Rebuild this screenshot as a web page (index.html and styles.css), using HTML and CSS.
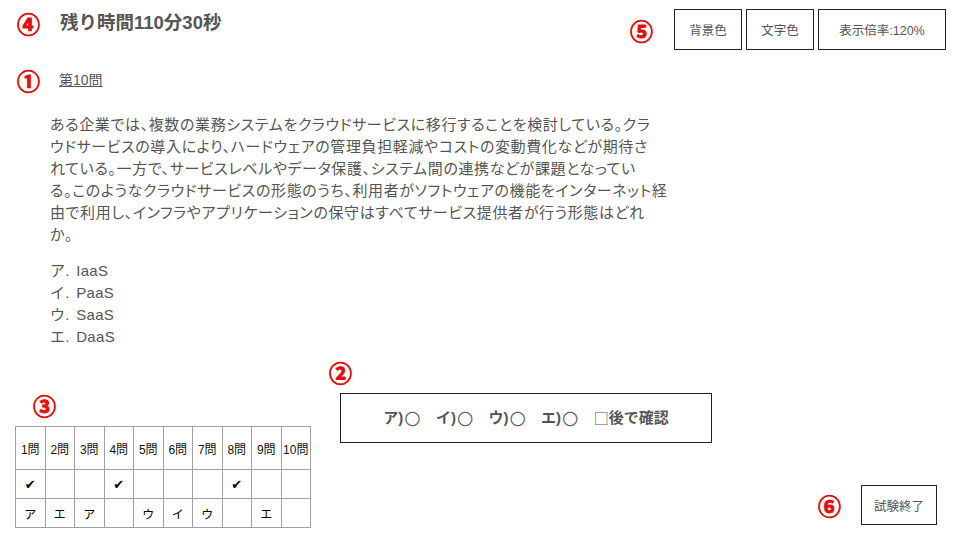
FILE: index.html
```html
<!DOCTYPE html>
<html lang="ja">
<head>
<meta charset="utf-8">
<link rel="stylesheet" href="styles.css">
</head>
<body>
<div class="page">
  <header class="header">
    <div class="timer-group">
      <span class="mark">④</span>
      <span class="timer">残り時間110分30秒</span>
    </div>
    <div class="tools">
      <span class="mark">⑤</span>
      <div class="tool-buttons">
        <button class="btn btn-bg">背景色</button>
        <button class="btn btn-fg">文字色</button>
        <button class="btn btn-zoom">表示倍率:120%</button>
      </div>
    </div>
  </header>

  <div class="qtitle-row">
    <span class="mark">①</span>
    <a class="qtitle">第10問</a>
  </div>

  <p class="question">ある企業では、複数の業務システムをクラウドサービスに移行することを検討している。クラ<br>ウドサービスの導入により、ハードウェアの管理負担軽減やコストの変動費化などが期待さ<br>れている。一方で、サービスレベルやデータ保護、システム間の連携などが課題となってい<br>る。このようなクラウドサービスの形態のうち、利用者がソフトウェアの機能をインターネット経<br>由で利用し、インフラやアプリケーションの保守はすべてサービス提供者が行う形態はどれ<br>か。</p>

  <ul class="options">
    <li>ア. IaaS</li>
    <li>イ. PaaS</li>
    <li>ウ. SaaS</li>
    <li>エ. DaaS</li>
  </ul>

  <div class="bottom">
    <div class="nav-col">
      <span class="mark nav-mark">③</span>
      <table class="nav">
        <tr class="head">
          <td>1問</td><td>2問</td><td>3問</td><td>4問</td><td>5問</td><td>6問</td><td>7問</td><td>8問</td><td>9問</td><td>10問</td>
        </tr>
        <tr class="checks">
          <td>✔</td><td></td><td></td><td>✔</td><td></td><td></td><td></td><td>✔</td><td></td><td></td>
        </tr>
        <tr class="answers">
          <td>ア</td><td>エ</td><td>ア</td><td></td><td>ウ</td><td>イ</td><td>ウ</td><td></td><td>エ</td><td></td>
        </tr>
      </table>
    </div>
    <div class="answer-col">
      <span class="mark">②</span>
      <div class="answer-box">ア)<span class="sym">○</span>　イ)<span class="sym">○</span>　ウ)<span class="sym">○</span>　エ)<span class="sym">○</span>　<span class="box">□</span>後で確認</div>
    </div>
    <div class="end-col">
      <span class="mark">⑥</span>
      <button class="btn btn-end">試験終了</button>
    </div>
  </div>
</div>
</body>
</html>
```

FILE: styles.css
```css
* { box-sizing: border-box; }
html, body { margin: 0; padding: 0; background: #fff; }
body {
  font-family: "Liberation Sans", "Noto Sans CJK JP", sans-serif;
  color: #555;
  width: 960px;
  height: 540px;
  overflow: hidden;
}
.page { width: 960px; height: 540px; display: flex; flex-direction: column; }

.mark {
  color: #e01010;
  font-family: "Noto Sans CJK JP", sans-serif;
  font-weight: bold;
  font-size: 23px;
  line-height: 22px;
  height: 22px;
  display: inline-block;
  width: 22px;
  text-align: center;
  -webkit-text-stroke: 0.9px #e01010;
}

.header {
  display: flex;
  justify-content: space-between;
  align-items: flex-start;
  padding: 9px 14px 0 17px;
  height: 49px;
}
.timer-group { display: flex; align-items: center; gap: 21px; margin-top: 3px; height: 22px; }
.timer { font-size: 18.5px; font-weight: bold; color: #555; line-height: 22px; }
.tools { display: flex; align-items: center; gap: 20px; }
.tool-buttons { display: flex; gap: 4px; }

.btn {
  font-family: "Liberation Sans", "Noto Sans CJK JP", sans-serif;
  background: #fff;
  border: 1px solid #222;
  color: #555;
  font-size: 12.5px;
  height: 41px;
  padding: 0;
  border-radius: 0;
}
.btn-bg { width: 68px; margin-left: 2px; }
.btn-fg { width: 68px; }
.btn-zoom { width: 128px; }

.qtitle-row { display: flex; align-items: center; gap: 20px; margin: 20px 0 0 17px; height: 22px; }
.qtitle { font-size: 14px; color: #555; text-decoration: underline; line-height: 20px; }

.question {
  margin: 23px 0 0 50px;
  font-size: 15px;
  line-height: 22px;
  color: #555;
  white-space: nowrap;
  font-feature-settings: "palt";
  letter-spacing: 0.62px;
}
.options {
  list-style: none;
  margin: 14px 0 0 50px;
  padding: 0;
  font-size: 15px;
  line-height: 22px;
  color: #555;
  letter-spacing: 0.3px;
  word-spacing: 2px;
}

.bottom {
  display: flex;
  margin-top: 13px;
  flex: 1;
}
.nav-col { display: flex; flex-direction: column; align-items: flex-start; padding-left: 15px; }
.nav-mark { margin: 33px 0 0 18px; }
.nav {
  margin-top: 10px;
  border-collapse: collapse;
  table-layout: fixed;
  width: 295px;
  font-size: 12px;
  color: #111;
}
.nav td {
  border: 1px solid #a0a0a0;
  width: 29.5px;
  padding: 0;
  text-align: center;
  white-space: nowrap;
}
.nav .head td { height: 43px; }
.nav .checks td { height: 29px; font-family: "DejaVu Sans", sans-serif; font-size: 13px; color: #000; }
.nav .answers td { height: 29px; color: #000; }

.answer-col { display: flex; flex-direction: column; align-items: flex-start; margin-left: 18px; }
.answer-box {
  margin: 10px 0 0 11px;
  width: 372px;
  height: 50px;
  border: 1px solid #222;
  display: flex;
  align-items: center;
  justify-content: center;
  font-size: 15px;
  font-weight: bold;
  color: #555;
  white-space: pre;
  line-height: 20px;
}
.sym {
  font-family: "DejaVu Sans", sans-serif;
  font-weight: normal;
  font-size: 19px;
  line-height: 20px;
  margin-left: 1px;
  position: relative;
  top: -1px;
}
.box { font-family: "Noto Sans CJK JP", sans-serif; font-weight: normal; }

.end-col {
  margin-left: auto;
  align-self: flex-end;
  display: flex;
  align-items: center;
  gap: 21px;
  margin-right: 23px;
  margin-bottom: 15px;
}
.btn-end { width: 76px; height: 40px; }
```
